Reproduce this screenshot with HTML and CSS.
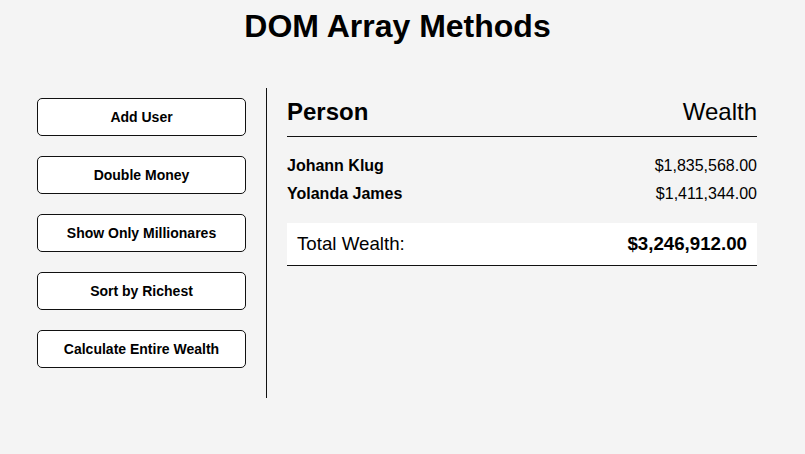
FILE: index.html
```html
<!DOCTYPE html>
<html lang="en">
<head>
<meta charset="UTF-8">
<title>DOM Array Methods</title>
<link rel="stylesheet" href="styles.css">
</head>
<body>
  <h1 class="title">DOM Array Methods</h1>
  <div class="container">
    <aside class="sidebar">
      <button class="btn">Add User</button>
      <button class="btn">Double Money</button>
      <button class="btn">Show Only Millionares</button>
      <button class="btn">Sort by Richest</button>
      <button class="btn">Calculate Entire Wealth</button>
    </aside>
    <main class="main">
      <h2 class="head"><strong class="bold">Person</strong> Wealth</h2>
      <div class="person"><strong class="bold">Johann Klug</strong> $1,835,568.00</div>
      <div class="person"><strong class="bold">Yolanda James</strong> $1,411,344.00</div>
      <h3 class="total"><span>Total Wealth:</span> <strong class="bold">$3,246,912.00</strong></h3>
    </main>
  </div>
</body>
</html>
```
FILE: styles.css
```css
* {
  box-sizing: content-box;
}

body {
  margin: 0;
  background: #f4f4f4;
  font-family: "Liberation Sans", Arial, Helvetica, sans-serif;
  color: #000;
}

.bold {
  font-weight: 700;
}

.title {
  margin: 8px 0 23px;
  padding-right: 10px;
  font-size: 32px;
  text-align: center;
}

.container {
  display: flex;
  padding: 20px 0 20px 17px;
}

.sidebar {
  width: 209px;
  padding: 10px 20px;
  border-right: 1px solid #111;
}

.btn {
  display: block;
  width: 100%;
  box-sizing: border-box;
  padding: 10px;
  margin-bottom: 20px;
  background: #fff;
  border: 1px solid #111;
  border-radius: 5px;
  font-family: "Liberation Sans", Arial, sans-serif;
  font-weight: bold;
  font-size: 14px;
  line-height: 16px;
  color: #000;
}

.main {
  width: 470px;
  padding: 10px 20px;
}

.head {
  display: flex;
  justify-content: space-between;
  margin: 0 0 20px;
  padding-bottom: 10px;
  border-bottom: 1px solid #111;
  font-size: 24px;
  font-weight: 400;
  line-height: 28px;
}

.person {
  display: flex;
  justify-content: space-between;
  margin-bottom: 10px;
  font-size: 16px;
  line-height: 18px;
}

.total {
  display: flex;
  justify-content: space-between;
  margin: 20px 0 0;
  padding: 10px;
  background: #fff;
  border-bottom: 1px solid #111;
  font-size: 18.72px;
  font-weight: 400;
  line-height: 22px;
}
```
